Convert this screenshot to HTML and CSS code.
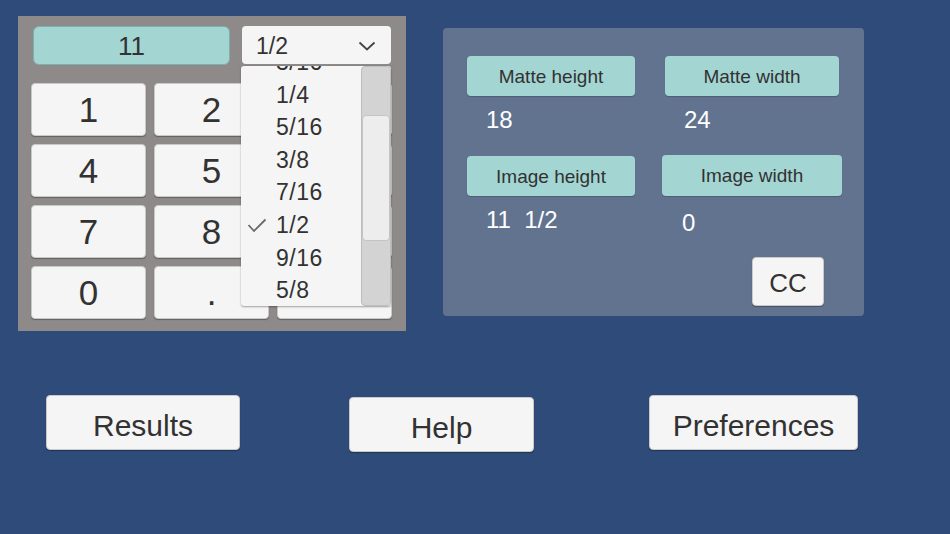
FILE: index.html
```html
<!DOCTYPE html>
<html lang="en">
<head>
    <meta charset="UTF-8">
    <meta name="viewport" content="width=device-width, initial-scale=1.0">
    <title>Matte Calculator</title>
    <link rel="stylesheet" href="styles.css">
</head>
<body>
    <div class="app">
        <div class="top">
            <div class="keypad">
                <div class="entry-row">
                    <div class="display">11</div>
                    <div class="fraction">
                        <div class="fraction-head">
                            <span>1/2</span>
                            <svg class="chevron" width="18" height="10" viewBox="0 0 18 10">
                                <polyline points="1.5,1.5 9,8.5 16.5,1.5" fill="none" stroke="#444" stroke-width="1.8"/>
                            </svg>
                        </div>
                        <div class="fraction-list">
                            <div class="list-items">
                                <div class="item">3/16</div>
                                <div class="item">1/4</div>
                                <div class="item">5/16</div>
                                <div class="item">3/8</div>
                                <div class="item">7/16</div>
                                <div class="item selected">
                                    <svg class="check" width="20" height="15" viewBox="0 0 20 15">
                                        <polyline points="1.5,7 7,13 18.5,1.5" fill="none" stroke="#6a6a6a" stroke-width="1.8"/>
                                    </svg>
                                    1/2
                                </div>
                                <div class="item">9/16</div>
                                <div class="item">5/8</div>
                            </div>
                            <div class="scrollbar">
                                <div class="scroll-handle"></div>
                            </div>
                        </div>
                    </div>
                </div>
                <div class="keys">
                    <button class="key">1</button>
                    <button class="key">2</button>
                    <button class="key">3</button>
                    <button class="key">4</button>
                    <button class="key">5</button>
                    <button class="key">6</button>
                    <button class="key">7</button>
                    <button class="key">8</button>
                    <button class="key">9</button>
                    <button class="key">0</button>
                    <button class="key">.</button>
                    <button class="key"></button>
                </div>
            </div>

            <div class="sizes">
                <div class="label">Matte height</div>
                <div class="label">Matte width</div>
                <div class="value">18</div>
                <div class="value">24</div>
                <div class="label">Image height</div>
                <div class="label wide">Image width</div>
                <div class="value">11&nbsp;&nbsp;1/2</div>
                <div class="value">0</div>
                <button class="btn cc">CC</button>
            </div>
        </div>

        <div class="bottom">
            <button class="btn big results">Results</button>
            <button class="btn big help">Help</button>
            <button class="btn big prefs">Preferences</button>
        </div>
    </div>
</body>
</html>
```

FILE: styles.css
```css
* {
    margin: 0;
    padding: 0;
    box-sizing: border-box;
}
body {
    font-family: "Liberation Sans", Arial, sans-serif;
    background: #2f4b79;
    width: 950px;
    height: 534px;
    overflow: hidden;
    color: #323232;
}
.top {
    display: flex;
    align-items: flex-start;
}
.keypad {
    margin: 16px 0 0 18px;
    width: 388px;
    height: 315px;
    background: #8f8a8a;
    padding: 10px 15px 0 13px;
}
.entry-row {
    display: flex;
    align-items: flex-start;
}
.display {
    margin-left: 2px;
    width: 197px;
    height: 39px;
    background: #a3d5d3;
    border: 1px solid #80aeac;
    border-radius: 6px;
    font-size: 26px;
    padding-top: 2px;
    display: flex;
    align-items: center;
    justify-content: center;
}
.fraction {
    position: relative;
    margin-left: 12px;
    width: 149px;
}
.fraction-head {
    height: 38px;
    background: #f5f5f5;
    border-radius: 4px;
    display: flex;
    align-items: center;
    justify-content: space-between;
    padding: 2px 15px 0 14px;
    font-size: 23px;
}
.chevron {
    margin-top: 0;
}
.fraction-list {
    position: absolute;
    top: 40px;
    left: -1px;
    width: 150px;
    height: 240px;
    background: #f5f5f5;
    border-radius: 3px;
    box-shadow: 0 1px 2px rgba(0,0,0,0.35);
    overflow: hidden;
    z-index: 2;
}
.list-items {
    margin-top: -20px;
}
.item {
    position: relative;
    height: 32.6px;
    line-height: 32.6px;
    padding-left: 35px;
    font-size: 23px;
    letter-spacing: 0.5px;
}
.check {
    position: absolute;
    left: 6px;
    top: 9px;
}
.scrollbar {
    position: absolute;
    top: 0;
    right: 0;
    width: 30px;
    height: 240px;
    background: #d3d3d3;
    border: 1px solid #bdbdbd;
    border-radius: 4px;
}
.scroll-handle {
    margin-top: 48px;
    height: 126px;
    background: #ededed;
    border: 1px solid #c4c4c4;
    border-radius: 4px;
}
.keys {
    margin-top: 18px;
    display: grid;
    grid-template-columns: repeat(3, 115px);
    grid-auto-rows: 53px;
    column-gap: 8px;
    row-gap: 8px;
}
.key, .btn {
    font-family: "Liberation Sans", Arial, sans-serif;
    color: #323232;
    background: #f5f5f5;
    border: 1px solid #c9c9c9;
    border-radius: 4px;
    box-shadow: 0 1px 1px rgba(0,0,0,0.3);
}
.key {
    font-size: 35px;
}
.sizes {
    margin: 28px 0 0 37px;
    width: 421px;
    height: 288px;
    background: #627390;
    border-radius: 4px;
    padding: 28px 0 0 24px;
    display: grid;
    grid-template-columns: 168px 174px;
    grid-template-rows: 40px 60px 40px 60px auto;
    column-gap: 30px;
}
.label {
    background: #a3d5d3;
    border-radius: 4px;
    box-shadow: 0 1px 1px rgba(0,0,0,0.2);
    font-size: 19px;
    padding-top: 1px;
    display: flex;
    align-items: center;
    justify-content: center;
}
.label.wide {
    margin: -1px -3px 0 -3px;
    height: 41px;
}
.value {
    color: #fff;
    font-size: 24px;
    line-height: 28px;
    padding: 10px 0 0 19px;
}
.value:nth-of-type(8) {
    padding: 13px 0 0 17px;
}
.cc {
    grid-column: 2;
    justify-self: end;
    margin: 1px 15px 0 0;
    width: 72px;
    height: 49px;
    font-size: 26px;
    padding-top: 3px;
}
.bottom {
    display: flex;
    align-items: flex-start;
    margin-top: 64px;
    padding-left: 46px;
}
.big {
    height: 55px;
    font-size: 30px;
    padding-top: 7px;
}
.results {
    width: 194px;
}
.help {
    width: 185px;
    margin: 2px 0 0 109px;
}
.prefs {
    width: 209px;
    margin-left: 115px;
}
```
